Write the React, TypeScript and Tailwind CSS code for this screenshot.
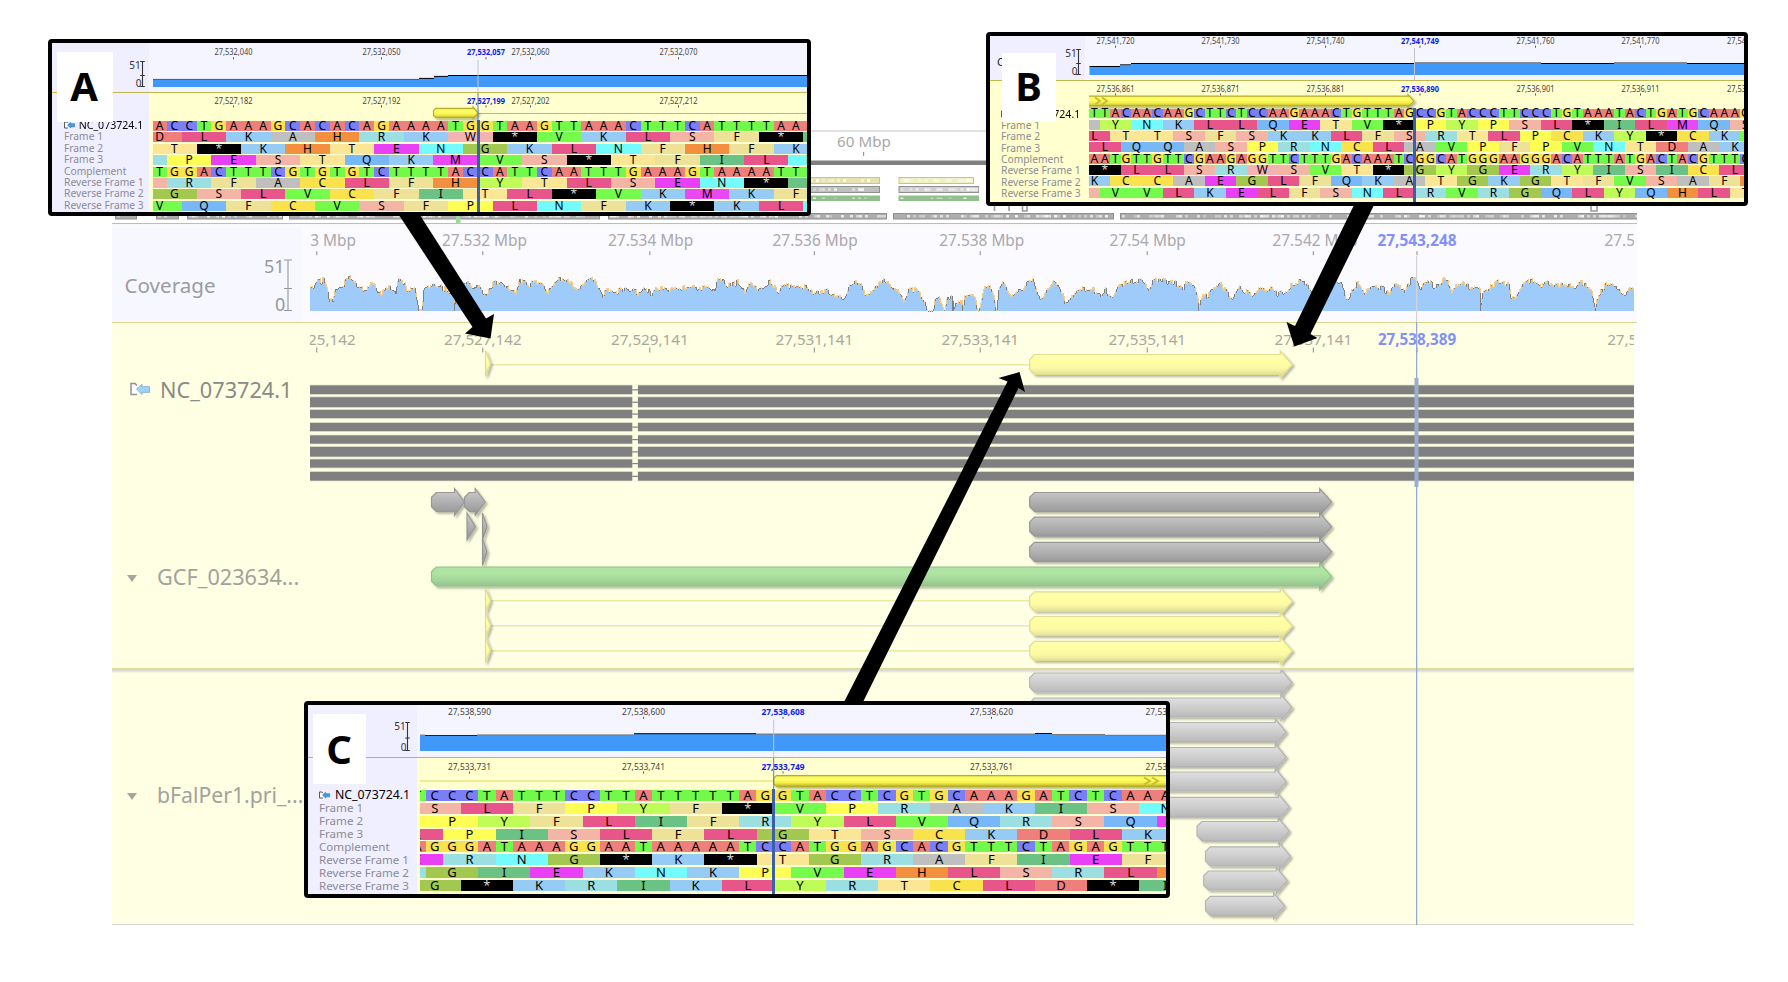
import React from "react";

const FONT = "font-['Noto_Sans','Open_Sans',sans-serif]";

/* ---------- residue colours ---------- */

const BASE: Record<string, string> = {
  A: "bg-[#ee7f7a]",
  C: "bg-[#7b7ff7]",
  G: "bg-[#f9e24c]",
  T: "bg-[#72fa4b]",
};

const AMINO: Record<string, string> = {
  D: "bg-[#ee7f7a]",
  L: "bg-[#e8558a]",
  K: "bg-[#96cbf6]",
  A: "bg-[#bfbfbf]",
  H: "bg-[#f29040]",
  R: "bg-[#9bdfe2]",
  W: "bg-[#f4b3b3]",
  T: "bg-[#fbe695]",
  "*": "bg-black text-[#dcdcdc]",
  E: "bg-[#ea40f5]",
  N: "bg-[#74fbfd]",
  P: "bg-[#fffe54]",
  S: "bg-[#f5b5a6]",
  Q: "bg-[#78b8f8]",
  F: "bg-[#eee298]",
  M: "bg-[#ea48f5]",
  V: "bg-[#74fb4c]",
  C: "bg-[#f9e24c]",
  I: "bg-[#6ac284]",
  G: "bg-[#a3c850]",
  Y: "bg-[#c0fc58]",
};

const PAIR: Record<string, string> = { A: "T", T: "A", C: "G", G: "C" };

/* ---------- small drawing helpers ---------- */

type Tick = { x: number; top: string; bottom: string; bold?: boolean; dx?: number };

function Ruler({
  ticks,
  line,
  y,
  size,
  width,
  tickGap,
  tickLen,
  color,
  boldColor,
  tickColor = "#555",
}: {
  ticks: Tick[];
  line: "top" | "bottom";
  y: number;
  size: number;
  width?: number;
  tickGap: number;
  tickLen: number;
  color: string;
  boldColor: string;
  tickColor?: string;
}) {
  return (
    <g>
      {ticks.map((t) => (
        <g key={t.x}>
          <text
            x={t.x + (line === "top" && t.dx ? t.dx : 0)}
            y={y}
            fontSize={size}
            textAnchor="middle"
            fontWeight={t.bold ? 700 : 400}
            fill={t.bold ? boldColor : color}
            textLength={width}
            lengthAdjust="spacingAndGlyphs"
          >
            {t[line]}
          </text>
          <rect x={t.x - 0.5} y={y + tickGap} width={1} height={tickLen} fill={tickColor} />
        </g>
      ))}
    </g>
  );
}

function Arrow({
  x1,
  x2,
  cy,
  body = 9.5,
  head = 13.5,
  headLen = 12,
  fill,
  stroke,
}: {
  x1: number;
  x2: number;
  cy: number;
  body?: number;
  head?: number;
  headLen?: number;
  fill: string;
  stroke: string;
}) {
  const h = x2 - headLen;
  const c = body / 2;
  const d =
    headLen >= x2 - x1
      ? `M${x1} ${cy - head}L${x2} ${cy}L${x1} ${cy + head}Z`
      : `M${x1 + c} ${cy - body}H${h}V${cy - head}L${x2} ${cy}L${h} ${cy + head}V${cy + body}H${x1 + c}L${x1} ${
          cy + c
        }V${cy - c}Z`;
  return <path d={d} fill={fill} stroke={stroke} strokeWidth={1.2} filter="url(#shade)" />;
}

function ContigIcon({ className, faded }: { className: string; faded?: boolean }) {
  return (
    <svg viewBox="0 0 20 14" className={className}>
      <path d="M7 12.5H1V1.5H5L7 3.5" fill="white" stroke={faded ? "#909098" : "#333"} strokeWidth={1.5} />
      <path
        d="M6.5 7L12 2.2V4.6H19.5V10.4H12V12.6Z"
        fill={faded ? "#9fcffb" : "#3f9bf5"}
        stroke={faded ? "#8aa8c8" : "#27527f"}
        strokeWidth={0.8}
      />
    </svg>
  );
}

function Scale({
  x,
  top,
  mid,
  bottom,
  size,
  color,
  half,
}: {
  x: number;
  top: number;
  mid: number;
  bottom: number;
  size: number;
  color: string;
  half: number;
}) {
  return (
    <g fill={color}>
      <text x={x - half + 0.5} y={top + size * 0.72} fontSize={size} textAnchor="end">
        51
      </text>
      <text x={x - half + 1.2} y={bottom} fontSize={size} textAnchor="end">
        0
      </text>
      <path
        d={`M${x} ${top}V${bottom}M${x - half} ${top}H${x + half}M${x - half} ${mid}H${x + half}M${x - half} ${bottom}H${
          x + half
        }`}
        stroke={color}
        strokeWidth={1.1}
        fill="none"
      />
    </g>
  );
}

/* ---------- inset panels ---------- */

type Row = { kind: "base" | "amino"; offset: number; seq: string };

type Step = { x: number; y: number; color: string };

type InsetData = {
  letter: string;
  frame: string;
  badge: string;
  asideW: string;
  asideLowerBg: string;
  upper: string;
  lower: string;
  labels: string;
  labelRow: string;
  nameClass: string;
  rowsPad: string;
  rowH: string;
  cellH: string;
  letterSize: string;
  left: number;
  asideRight: number;
  right: number;
  top: number;
  split: number;
  rowsTop: number;
  trackX: number;
  origin: number;
  col: number;
  scale: { x: number; top: number; mid: number; bottom: number };
  coverageBase: number;
  coverage: Step[];
  rulerTop: number;
  rulerBottom: number;
  labelW: number;
  ticks: Tick[];
  rows: Row[];
  cursor: number;
  cursorTop: number;
  annotation: React.ReactNode;
};

const complement = (s: string) => s.split("").map((b) => PAIR[b]).join("");

const makeRows = (seq: string, aminos: [number, string][]): Row[] => {
  const am = aminos.map(([offset, s]) => ({ kind: "amino" as const, offset, seq: s }));
  return [
    { kind: "base", offset: 0, seq },
    ...am.slice(0, 3),
    { kind: "base", offset: 0, seq: complement(seq) },
    ...am.slice(3),
  ];
};

const ROW_NAMES = ["Frame 1", "Frame 2", "Frame 3", "Complement", "Reverse Frame 1", "Reverse Frame 2", "Reverse Frame 3"];

function SequenceRow({ row, d }: { row: Row; d: InsetData }) {
  const span = row.kind === "base" ? 1 : 3;
  const shift = d.origin + row.offset * d.col - d.trackX;
  return (
    <div className={`flex items-start overflow-x-clip ${d.rowH}`}>
      <div className="flex shrink-0" style={{ marginLeft: shift }}>
        {row.seq.split("").map((ch, i) => (
          <span
            key={i}
            className={`flex shrink-0 items-center justify-center leading-none ${d.cellH} ${d.letterSize} ${
              (row.kind === "base" ? BASE : AMINO)[ch]
            }`}
            style={{ width: span * d.col }}
          >
            {ch}
          </span>
        ))}
      </div>
    </div>
  );
}

function Inset({ d }: { d: InsetData }) {
  const pts = d.coverage;
  const area =
    `M${pts[0].x} ${d.coverageBase}` +
    pts.map((p, i) => `V${p.y}H${i + 1 < pts.length ? pts[i + 1].x : d.right}`).join("") +
    `V${d.coverageBase}Z`;
  return (
    <section className={`absolute overflow-hidden rounded-[4px] border-4 border-black bg-[#ffffcf] text-black ${d.frame}`}>
      <div className={`flex border-b border-[#bdb84a] bg-[#f5f5ff] ${d.upper}`}>
        <svg
          viewBox={`${d.left} ${d.top} ${d.asideRight - d.left} ${d.split - d.top}`}
          className={`h-full shrink-0 bg-[#efefff] ${d.asideW}`}
        >
          {d.letter === "B" && (
            <text x={d.left + 7} y={66} fontSize={11} fill="#222">
              Coverage
            </text>
          )}
          <Scale {...d.scale} size={10} color="#333" half={2.3} />
        </svg>
        <svg
          viewBox={`${d.asideRight} ${d.top} ${d.right - d.asideRight} ${d.split - d.top}`}
          className="h-full min-w-0 flex-1"
        >
          <Ruler
            ticks={d.ticks}
            line="top"
            y={d.rulerTop}
            size={9}
            width={d.labelW}
            tickGap={2}
            tickLen={2}
            color="#444"
            boldColor="#0a1af0"
          />
          <path d={area} fill="#4099f8" />
          {pts.map((p, i) => (
            <rect
              key={p.x}
              x={p.x}
              y={p.y - 0.6}
              width={(i + 1 < pts.length ? pts[i + 1].x : d.right) - p.x}
              height={1}
              fill={p.color}
            />
          ))}
          <rect x={d.cursor - 0.5} y={d.cursorTop} width={1} height={60} fill="#c4c4c8" />
        </svg>
      </div>
      <div className="flex min-h-0 flex-1">
        <div className={`flex shrink-0 flex-col whitespace-nowrap text-[#8c8c94] ${d.asideW} ${d.asideLowerBg} ${d.labels}`}>
          <div className={`flex items-center text-black ${d.labelRow}`}>
            <ContigIcon className="h-[8px] w-[11px] shrink-0" />
            <span className={`origin-left ${d.nameClass}`}>NC_073724.1</span>
          </div>
          {ROW_NAMES.map((n) => (
            <div key={n} className={`flex items-center ${d.labelRow}`}>
              {n}
            </div>
          ))}
        </div>
        <div className="flex min-w-0 flex-1 flex-col">
          <svg
            viewBox={`${d.asideRight} ${d.split + 1} ${d.right - d.asideRight} ${d.rowsTop - d.split - 1}`}
            className={`w-full shrink-0 ${d.lower}`}
          >
            <Ruler
              ticks={d.ticks}
              line="bottom"
              y={d.rulerBottom}
              size={9}
              width={d.labelW}
              tickGap={1.7}
              tickLen={2}
              color="#444"
              boldColor="#0a1af0"
            />
            <svg
              x={d.trackX}
              y={d.split}
              width={d.right - d.trackX}
              height={60}
              viewBox={`${d.trackX} ${d.split} ${d.right - d.trackX} 60`}
            >
              {d.annotation}
            </svg>
            {d.letter !== "B" && <rect x={d.cursor - 0.5} y={d.split} width={1} height={60} fill="#5b7db8" />}
          </svg>
          <div className={`relative flex flex-col ${d.rowsPad}`}>
            {d.rows.map((r, i) => (
              <SequenceRow key={i} row={r} d={d} />
            ))}
            <div
              className="absolute -top-px h-[120px] w-[3px] bg-[#3d5fa6]"
              style={{ left: d.cursor - 1.5 - d.asideRight }}
            />
          </div>
        </div>
      </div>
      <div className={`absolute flex items-center justify-center bg-white font-bold ${d.badge}`}>
        <span className="text-[40px] leading-none">{d.letter}</span>
      </div>
    </section>
  );
}

const BAR = "url(#bright)";

const PANEL_A: InsetData = {
  letter: "A",
  frame: "left-[48px] top-[39px] w-[763px] h-[177px] flex flex-col",
  badge: "left-[5px] top-[9px] w-[56px] h-[70px] pb-[3px] pr-[2px]",
  asideW: "w-[97px]",
  asideLowerBg: "bg-[#efefff]",
  upper: "h-[50px]",
  lower: "h-[28px]",
  labels: "pt-[26.5px] pl-[12px] text-[10.25px]",
  labelRow: "h-[11.38px] leading-none shrink-0",
  nameClass: "pl-[4px] text-[11.5px] scale-x-[0.92]",
  rowsPad: "pl-[4px]",
  rowH: "h-[11.38px]",
  cellH: "h-[10px]",
  letterSize: "text-[12px]",
  left: 52,
  asideRight: 149,
  right: 807,
  top: 43,
  split: 92,
  rowsTop: 121,
  trackX: 153,
  origin: 152.2,
  col: 14.8,
  scale: { x: 142.5, top: 61.5, mid: 75.5, bottom: 86.5 },
  coverageBase: 87,
  coverage: [
    { x: 153, y: 79.5, color: "#555" },
    { x: 419, y: 78.5, color: "#000" },
    { x: 434, y: 76.5, color: "#000" },
    { x: 448, y: 75.6, color: "#000" },
  ],
  rulerTop: 55.3,
  rulerBottom: 103.7,
  labelW: 38,
  ticks: [
    { x: 233.5, top: "27,532,040", bottom: "27,527,182" },
    { x: 381.5, top: "27,532,050", bottom: "27,527,192" },
    { x: 486, top: "27,532,057", bottom: "27,527,199", bold: true },
    { x: 530.5, top: "27,532,060", bottom: "27,527,202" },
    { x: 678.5, top: "27,532,070", bottom: "27,527,212" },
  ],
  rows: makeRows("ACCTGAAAGCACACAGAAAATGGTAAGTTAAACTTTCATTTTAAA", [
    [-1, "DLKAHRKW*VKLSF*I"],
    [0, "T*KHTENGKLNFHFK"],
    [-2, "RPESTQKMVS*TFILN"],
    [-2, "SRFACLFHYTLSEN*I"],
    [0, "GSLVCFITL*VKMKF"],
    [-1, "VQFCVSFPLNFK*KLN"],
  ]),
  cursor: 478,
  cursorTop: 60,
  annotation: (
    <g>
      <rect x={478} y={113} width={330} height={1} fill="#c4bd3c" />
      <Arrow x1={433.5} x2={478} cy={113} body={4.7} head={6} headLen={5} fill={BAR} stroke="#b5ae2c" />
    </g>
  ),
};

const PANEL_B: InsetData = {
  letter: "B",
  frame: "left-[986px] top-[32px] w-[762px] h-[174px] flex flex-col",
  badge: "left-[12px] top-[17px] w-[54px] h-[69px] pb-[4px] pr-[1px]",
  asideW: "w-[95px]",
  asideLowerBg: "bg-[#ffffcf]",
  upper: "h-[45px]",
  lower: "h-[27.5px]",
  labels: "pt-[27px] pl-[11px] text-[10.25px]",
  labelRow: "h-[11.33px] leading-none shrink-0",
  nameClass: "pl-[4px] text-[11.5px] scale-x-[0.92]",
  rowsPad: "pl-[4px]",
  rowH: "h-[11.33px]",
  cellH: "h-[9.8px]",
  letterSize: "text-[12px]",
  left: 990,
  asideRight: 1085,
  right: 1744,
  top: 36,
  split: 80,
  rowsTop: 108.5,
  trackX: 1089,
  origin: 1089.1,
  col: 10.5,
  scale: { x: 1078.5, top: 49.5, mid: 63.5, bottom: 74.5 },
  coverageBase: 75,
  coverage: [
    { x: 1089.5, y: 66.6, color: "#000" },
    { x: 1120, y: 64.8, color: "#333" },
    { x: 1131, y: 63.6, color: "#000" },
    { x: 1414, y: 62.8, color: "#777" },
    { x: 1541, y: 63.6, color: "#000" },
    { x: 1614, y: 62.8, color: "#777" },
    { x: 1687, y: 63.6, color: "#000" },
  ],
  rulerTop: 43.7,
  rulerBottom: 91.8,
  labelW: 38,
  ticks: [
    { x: 1115.5, top: "27,541,720", bottom: "27,536,861" },
    { x: 1220.5, top: "27,541,730", bottom: "27,536,871" },
    { x: 1325.5, top: "27,541,740", bottom: "27,536,881" },
    { x: 1420, top: "27,541,749", bottom: "27,536,890", bold: true },
    { x: 1535.5, top: "27,541,760", bottom: "27,536,901" },
    { x: 1640.5, top: "27,541,770", bottom: "27,536,911" },
    { x: 1746, top: "27,541,780", bottom: "27,536,921" },
  ],
  rows: makeRows("TTACAACAAGCTTCTCCAAGAAACTGTTTAGCCGTACCCTTCCCTGTAAATACTGATGCAAAG", [
    [-2, "AYNKLLQETV*PYPSL*ILMQS"],
    [-1, "LTTSFSKKLFSRTLPCKY*CKV"],
    [0, "LQQASPRNCLAVPFPVNTDAK"],
    [0, "*LLSRWSVT*GYGERYISICL"],
    [-1, "KCCAEGLFQKATGKGTFVSAFH"],
    [-2, "SVVLKELFSNLRVRGQLYQHLT"],
  ]),
  cursor: 1414.5,
  cursorTop: 48,
  annotation: (
    <g>
      <Arrow x1={1080} x2={1414} cy={101} body={4.8} head={6.5} headLen={6} fill={BAR} stroke="#b5ae2c" />
      <path d="M1095 97.5l5 3.5l-5 3.5M1102 97.5l5 3.5l-5 3.5" fill="none" stroke="#c8bf30" strokeWidth={2} />
    </g>
  ),
};

const PANEL_C: InsetData = {
  letter: "C",
  frame: "left-[304px] top-[701px] w-[866px] h-[197px] flex flex-col",
  badge: "left-[5px] top-[9px] w-[53px] h-[70px] pb-[1px] pr-[1px]",
  asideW: "w-[109px]",
  asideLowerBg: "bg-[#efefff]",
  upper: "h-[53px]",
  lower: "h-[32px]",
  labels: "pt-[31px] pl-[11px] text-[11.6px]",
  labelRow: "h-[12.87px] leading-none shrink-0",
  nameClass: "pl-[5px] text-[12.3px]",
  rowsPad: "pl-[3px]",
  rowH: "h-[12.87px]",
  cellH: "h-[11px]",
  letterSize: "text-[13px]",
  left: 308,
  asideRight: 417,
  right: 1166,
  top: 705,
  split: 757,
  rowsTop: 790,
  trackX: 420,
  origin: 408.6,
  col: 17.4,
  scale: { x: 407.5, top: 722.5, mid: 738, bottom: 750.5 },
  coverageBase: 751,
  coverage: [
    { x: 420, y: 735.2, color: "#777" },
    { x: 425, y: 735.6, color: "#222" },
    { x: 477, y: 735, color: "#777" },
    { x: 634, y: 733.8, color: "#000" },
    { x: 756, y: 734.2, color: "#666" },
    { x: 1035, y: 733.6, color: "#000" },
    { x: 1052, y: 734.6, color: "#777" },
    { x: 1105, y: 735.4, color: "#666" },
  ],
  rulerTop: 714.8,
  rulerBottom: 769.8,
  labelW: 43,
  ticks: [
    { x: 469.5, top: "27,538,590", bottom: "27,533,731" },
    { x: 643.5, top: "27,538,600", bottom: "27,533,741" },
    { x: 783, top: "27,538,608", bottom: "27,533,749", bold: true },
    { x: 991.5, top: "27,538,620", bottom: "27,533,761" },
    { x: 1167, top: "27,538,630", bottom: "27,533,771" },
  ],
  rows: makeRows("TCCCTATTTCCTTATTTTTAGGTACCTCGTGCAAAGATCTCAAA", [
    [0, "SLFPYF*VPRAKISN"],
    [-2, "PPYFLIFRYLVQRSQE"],
    [-1, "LPISLFLGTSCKDLK"],
    [-1, "ERNG*K*TGRAFIEF"],
    [-2, "RGIEKNKPVEHLSRLH"],
    [0, "G*KRIKLYRTCLD*I"],
  ]),
  cursor: 773.7,
  cursorTop: 720,
  annotation: (
    <g>
      <rect x={420} y={780.5} width={354} height={1} fill="#e0d65a" />
      <Arrow x1={773.7} x2={1190} cy={781} body={5.3} head={6.5} headLen={6} fill={BAR} stroke="#b5ae2c" />
      <path d="M1144 777.5l6 3.5l-6 3.5M1152 777.5l6 3.5l-6 3.5" fill="none" stroke="#c8bf30" strokeWidth={2} />
    </g>
  ),
};

/* ---------- coverage profile ---------- */

type Block = { x0: number; y0: number; sx: number; pts: number[] };

const BLOCKS: Block[] = [
  {
    x0: 100,
    y0: 210,
    sx: 2.8,
    pts: [
      589, 235, 600, 230, 610, 212, 625, 214, 634, 235, 640, 270, 650, 275, 656, 240, 668, 225, 680, 225, 690, 205, 700,
      203, 710, 215, 725, 235, 745, 245, 752, 220, 765, 220, 775, 245, 790, 250, 798, 232, 820, 235, 826, 255, 834, 212,
      850, 215, 858, 245, 880, 235, 890, 300, 900, 300, 905, 235, 930, 222, 945, 225, 960, 240, 975, 245, 988, 260, 990,
      300, 994, 240, 1020, 215, 1040, 228, 1055, 235, 1065, 245, 1077, 260, 1090, 235, 1105, 215, 1125, 222, 1145, 235,
      1162, 252,
    ],
  },
  {
    x0: 480,
    y0: 200,
    sx: 3,
    pts: [
      118, 243, 130, 240, 145, 260, 155, 248, 175, 250, 190, 265, 200, 280, 215, 252, 230, 240, 245, 235, 265, 243, 285,
      268, 300, 262, 315, 240, 335, 240, 350, 262, 365, 285, 375, 272, 400, 275, 430, 268, 460, 270, 470, 283, 495, 262,
      512, 285, 525, 265, 560, 270, 600, 265, 625, 258, 650, 270, 685, 262, 700, 275, 712, 240, 728, 240, 740, 258, 775,
      248, 790, 278, 805, 248, 830, 270, 850, 255, 865, 248, 880, 262, 895, 282,
    ],
  },
  {
    x0: 780,
    y0: 110,
    sx: 2.8,
    pts: [
      4, 530, 20, 527, 40, 532, 75, 532, 90, 548, 110, 548, 125, 535, 140, 555, 165, 555, 175, 575, 185, 545, 195, 520,
      212, 512, 222, 530, 235, 545, 260, 545, 275, 520, 292, 512, 310, 525, 320, 545, 335, 548, 345, 570, 357, 540, 375,
      540, 390, 555, 402, 575, 410, 603, 428, 603, 430, 575, 438, 560, 450, 575, 455, 603, 459, 600, 468, 565, 480, 560,
      485, 603, 490, 575, 510, 580, 511, 603, 515, 555, 530, 555, 545, 575, 550, 603, 556, 603, 560, 575, 570, 535, 588,
      535, 598, 560, 602, 603, 606, 600, 610, 540, 620, 520, 635, 545, 645, 555, 655, 545, 680, 535, 695, 515, 705, 512,
      715, 540, 725, 575, 740, 555, 755, 530, 765, 518, 780, 530, 795, 575, 810, 570, 825, 545, 850, 540, 880, 545, 895,
      555, 910, 540, 925, 570, 945, 535, 965, 520, 990, 512, 1010, 515, 1030, 540, 1040, 520, 1060, 510, 1100, 520, 1130,
      535, 1140, 512, 1160, 530, 1168, 570, 1171, 603, 1175, 570, 1195, 555, 1220, 530, 1232, 520, 1245, 545, 1265, 570,
      1285, 535, 1300, 545, 1320, 555, 1340, 540, 1360, 548, 1370, 530, 1385, 550, 1410, 555, 1425, 530, 1450, 515,
    ],
  },
  {
    x0: 1200,
    y0: 200,
    sx: 3,
    pts: [
      300, 240, 320, 255, 335, 275, 360, 280, 380, 250, 400, 240, 420, 255, 435, 290, 445, 300, 455, 275, 470, 250, 485,
      275, 490, 285, 500, 260, 520, 260, 545, 265, 565, 285, 575, 260, 595, 260, 612, 280, 622, 250, 640, 235, 650, 250,
      660, 278, 672, 250, 685, 242, 700, 262, 715, 255, 730, 235, 745, 255, 755, 285, 770, 250, 785, 245, 800, 262, 825,
      260, 838, 275, 841, 333, 845, 275, 865, 265, 890, 250, 925, 247, 930, 290, 940, 300, 950, 285, 965, 255, 985, 245,
      1000, 240, 1015, 260, 1040, 250, 1060, 260, 1090, 255, 1120, 260, 1145, 250, 1160, 260, 1175, 285, 1184, 333, 1188,
      290, 1205, 275, 1220, 250, 1235, 248, 1250, 260, 1270, 285, 1290, 268, 1302, 265,
    ],
  },
];

/* Narrow drop-outs that reach the base line. */
const DROPS = [418, 454, 943, 952, 953, 962, 977, 995, 996, 1198, 1480, 1595];

const COVERAGE = BLOCKS.flatMap((b) => {
  const out: { x: number; y: number }[] = [];
  for (let i = 0; i < b.pts.length; i += 2) out.push({ x: b.x0 + b.pts[i] / b.sx, y: b.y0 + b.pts[i + 1] / 3 });
  return out;
});

const hash = (n: number) => {
  const v = Math.sin(n * 127.1) * 43758.5453;
  return v - Math.floor(v);
};

const COVERAGE_BASE = 311;
const profile: number[] = [];
{
  let k = 0;
  for (let x = 310; x < 1634; x++) {
    while (k < COVERAGE.length - 2 && COVERAGE[k + 1].x < x) k++;
    const a = COVERAGE[k];
    const b = COVERAGE[k + 1];
    const t = Math.max(0, Math.min(1, (x - a.x) / (b.x - a.x)));
    const y = a.y + (b.y - a.y) * t;
    const n = y > 304 ? 0 : Math.round((hash(Math.floor(x / 2)) - 0.5) * 5.4);
    profile.push(Math.min(COVERAGE_BASE, Math.round(y + n)));
  }
}

function CoveragePlot() {
  const area = `M310 ${COVERAGE_BASE}` + profile.map((y, i) => `V${y}H${311 + i}`).join("") + `V${COVERAGE_BASE}Z`;
  let grey = "";
  let amber = "";
  profile.forEach((y, i) => {
    const x = 310 + i;
    const prev = i ? profile[i - 1] : y;
    const lo = Math.min(prev, y);
    const h = Math.max(1, Math.abs(prev - y));
    grey += `M${x} ${lo}h1v${h}h-1z`;
    if (hash(x * 3.3) > 0.5) amber += `M${x} ${lo - 1}h1v${Math.min(5, h + 0.9)}h-1z`;
  });
  DROPS.forEach((x) => {
    const y = profile[x - 310];
    grey += `M${x} ${y}h1V${COVERAGE_BASE}h-1z`;
  });
  return (
    <g shapeRendering="crispEdges">
      <path d={area} fill="#9fcbfb" />
      <path d={grey} fill="#7f7f7f" />
      <path d={amber} fill="#f4cd8a" />
    </g>
  );
}

/* ---------- overview strip ---------- */

function Strip({
  x1,
  x2,
  y,
  h,
  edge,
  fill,
  light,
}: {
  x1: number;
  x2: number;
  y: number;
  h: number;
  edge: string;
  fill: string;
  light: number;
}) {
  const cells = [];
  for (let x = x1 + 2; x < x2 - 3; x += 3) {
    const v = hash(x + y);
    if (v < light) cells.push(<rect key={x} x={x} y={y + 2} width={3} height={h - 4} fill="white" opacity={0.25 + v / light / 1.6} />);
  }
  return (
    <g>
      <rect x={x1 + 0.5} y={y + 0.5} width={x2 - x1 - 1} height={h - 1} fill={fill} stroke={edge} />
      {cells}
    </g>
  );
}

function Overview() {
  const genes: [number, number][] = [
    [115, 137],
    [156, 179],
    [187, 283],
    [289, 600],
    [608, 887],
    [893, 1114],
    [1120, 1640],
  ];
  return (
    <svg viewBox="112 130 1525 98" className="h-[98px] w-full shrink-0">
      <rect x={112} y={130.5} width={1525} height={1} fill="#c4c4c4" />
      <text x={864} y={147.3} fontSize={15.2} textAnchor="middle" fill="#a8a8a8">
        60 Mbp
      </text>
      <rect x={863} y={152} width={1.2} height={4} fill="#999" />
      <rect x={112} y={160.5} width={1525} height={4.5} fill="#808080" />
      <Strip x1={700} x2={880} y={177} h={7} edge="#cac583" fill="#e6e3b0" light={0.4} />
      <Strip x1={898.5} x2={974} y={177} h={7} edge="#cac583" fill="#f0efc4" light={0.6} />
      <Strip x1={700} x2={880} y={186} h={7} edge="#909090" fill="#c0c0c0" light={0.5} />
      <Strip x1={898.5} x2={979} y={186} h={7} edge="#909090" fill="#cfcfcf" light={0.5} />
      <Strip x1={700} x2={880} y={195.5} h={5.5} edge="#8fbf8a" fill="#93bf90" light={0.3} />
      <Strip x1={898.5} x2={979} y={195.5} h={5.5} edge="#8fbf8a" fill="#93bf90" light={0.3} />
      <path d="M994.5 204V211M1009 204V211M1022.5 204V211H1027V204M1591 204V211H1597V204" fill="none" stroke="#999" strokeWidth={1.6} />
      {genes.map(([a, b]) => (
        <Strip key={a} x1={a} x2={b} y={213} h={6.5} edge="#909090" fill="#adadad" light={0.5} />
      ))}
      <rect x={456} y={215} width={4.5} height={8} fill="#a2d79c" />
      <rect x={112} y={223} width={1525} height={1.2} fill="#bdbdbd" />
      <rect x={112} y={224.2} width={1525} height={4} fill="#fafafa" />
    </svg>
  );
}

/* ---------- main tracks ---------- */

const MAIN_TICKS: Tick[] = [
  { x: 316.8, top: "27.53 Mbp", bottom: "27,525,142", dx: 1 },
  { x: 482.8, top: "27.532 Mbp", bottom: "27,527,142", dx: 1.6 },
  { x: 649.8, top: "27.534 Mbp", bottom: "27,529,141", dx: 0.8 },
  { x: 814.3, top: "27.536 Mbp", bottom: "27,531,141", dx: 0.8 },
  { x: 980.2, top: "27.538 Mbp", bottom: "27,533,141", dx: 1.6 },
  { x: 1147.2, top: "27.54 Mbp", bottom: "27,535,141", dx: 0.5 },
  { x: 1313.3, top: "27.542 Mbp", bottom: "27,537,141", dx: 1.6 },
  { x: 1417, top: "27,543,248", bottom: "27,538,389", bold: true },
  { x: 1646, top: "27.546 Mbp", bottom: "27,541,141", dx: 1 },
];

const READS: [number, number][] = [
  [385.5, 394],
  [397.3, 407],
  [410, 418],
  [423, 431],
  [435.5, 443.5],
  [447, 456.5],
  [459.5, 467.5],
  [472, 480.5],
];

const YELLOW = { fill: "url(#pale)", stroke: "#e0dc90" };
const GREY = { fill: "url(#grey)", stroke: "#979797" };
const SILVER = { fill: "url(#silver)", stroke: "#b4b4b4" };

const SILVER_ROWS: [number, number, number][] = [
  [1029.7, 1292, 682.5],
  [1029.7, 1292, 707.5],
  [1029.7, 1286.3, 732],
  [1029.7, 1286.3, 757],
  [1029.7, 1286.3, 781.5],
  [1029.7, 1289.3, 806.8],
  [1197, 1289.3, 831],
  [1205.5, 1290.6, 856.3],
  [1203.7, 1287.3, 880.5],
  [1205.5, 1284.6, 905.8],
];

function Intron({ y }: { y: number }) {
  return (
    <g>
      <rect x={491} y={y - 2.2} width={538} height={4.5} fill="#fffffa" />
      <rect x={491} y={Math.round(y) - 1} width={538} height={1.6} fill="#eeea9a" />
    </g>
  );
}

function ReferenceTrack() {
  return (
    <svg viewBox="310 323 1324 345" className="h-[345px] w-[1324px] shrink-0">
      <Ruler
        ticks={MAIN_TICKS}
        line="bottom"
        y={344.5}
        size={15.2}
        tickGap={3}
        tickLen={5}
        color="#a8a89d"
        boldColor="#8290fa"
        tickColor="#8c8c84"
      />
      <Intron y={365} />
      <Arrow x1={485.5} x2={490.4} cy={363.5} head={13} {...YELLOW} />
      <Arrow x1={1029.7} x2={1292.3} cy={364.5} body={10} {...YELLOW} />
      {READS.map(([a, b]) => (
        <g key={a}>
          <rect x={310} y={a - 0.7} width={1324} height={b - a + 1.4} fill="#c6c6b8" />
          <rect x={310} y={a} width={1324} height={b - a} fill="#808080" />
          <rect x={632.3} y={a - 1} width={5.6} height={b - a + 2} fill="#feffe3" />
          <rect x={632.3} y={(a + b) / 2 - 0.5} width={5.6} height={1.2} fill="#80807a" />
        </g>
      ))}
      <Arrow x1={431.5} x2={464.5} cy={502} headLen={10} {...GREY} />
      <Arrow x1={464.5} x2={485.2} cy={502} headLen={10} {...GREY} />
      <Arrow x1={467} x2={475.5} cy={526.5} headLen={20} {...GREY} />
      <Arrow x1={482.5} x2={487} cy={526.5} headLen={20} {...GREY} />
      <Arrow x1={482.5} x2={487} cy={552} headLen={20} {...GREY} />
      <Arrow x1={1029.7} x2={1331.7} cy={502} {...GREY} />
      <Arrow x1={1029.7} x2={1331.7} cy={526.7} {...GREY} />
      <Arrow x1={1029.7} x2={1331.7} cy={551.8} {...GREY} />
      <Arrow x1={431.5} x2={1331.7} cy={576.5} fill="url(#green)" stroke="#8cc487" />
      {[601.3, 626, 650.8].map((y) => (
        <g key={y}>
          <Intron y={y} />
          <Arrow x1={485.5} x2={490.4} cy={y - 0.5} head={12.5} {...YELLOW} />
          <Arrow x1={1029.7} x2={1292.3} cy={y} {...YELLOW} />
        </g>
      ))}
    </svg>
  );
}

function Defs() {
  const ramps: [string, string[]][] = [
    ["pale", ["#fdfcb8", "#ffffa2", "#fbf9a4", "#dedc98"]],
    ["bright", ["#f4ee60", "#ffff62", "#f6f04e", "#b9b12c"]],
    ["grey", ["#c8c8c8", "#b8b8b8", "#a8a8a8", "#979797"]],
    ["silver", ["#e0e0e0", "#d4d4d4", "#c6c6c6", "#b8b8b8"]],
    ["green", ["#b0e0a4", "#b0e4a2", "#a2d698", "#96bd8e"]],
  ];
  return (
    <svg className="absolute size-0">
      <defs>
        {ramps.map(([id, stops]) => (
          <linearGradient key={id} id={id} x1="0" y1="0" x2="0" y2="1">
            {stops.map((c, i) => (
              <stop key={i} offset={0.1 + i * 0.27} stopColor={c} />
            ))}
          </linearGradient>
        ))}
        <filter id="shade" filterUnits="userSpaceOnUse" x="0" y="0" width="1788" height="982">
          <feDropShadow dx="2" dy="2" stdDeviation="1.3" floodColor="#000" floodOpacity="0.28" />
        </filter>
      </defs>
    </svg>
  );
}

export default function App() {
  return (
    <div className={`relative h-[982px] w-[1788px] overflow-hidden bg-white ${FONT}`}>
      <Defs />

      <main className="ml-[112px] flex w-[1525px] flex-col pt-[130px]">
        <Overview />

        <div className="flex h-[95px] border-b-[1.5px] border-[#dcd88c] bg-[#fbfaff]">
          <div className="flex w-[190px] shrink-0 items-start bg-[#f7f7ff]">
            <span className="mt-[45px] ml-[12.5px] w-[92.5px] text-[20.6px] leading-[24px] text-[#9c9ca1]">Coverage</span>
            <svg viewBox="217 228 85 93" className="h-[93px] w-[85px] shrink-0">
              <Scale x={288} top={260} mid={288.5} bottom={310.5} size={18} color="#98989c" half={4} />
            </svg>
          </div>
          <svg viewBox="302 228 1332 93" className="h-[93px] w-[1332px] shrink-0">
            <svg x={310} y={228} width={1324} height={93} viewBox="310 228 1324 93">
              <Ruler
                ticks={MAIN_TICKS}
                line="top"
                y={246.2}
                size={15.4}
                tickGap={5}
                tickLen={4}
                color="#a8a8ad"
                boldColor="#8290fa"
                tickColor="#8c8c90"
              />
              <CoveragePlot />
            </svg>
          </svg>
        </div>

        <div className="flex h-[345px] w-[1522px] bg-[#feffe3]">
          <div className="flex w-[198px] shrink-0 flex-col text-[21.7px] leading-[28px] whitespace-nowrap">
            <div className="mt-[53px] flex items-center pl-[18px] text-[#8a8a86]">
              <ContigIcon faded className="mb-[2px] h-[14px] w-[20px] shrink-0" />
              <span className="pl-[10px]">NC_073724.1</span>
            </div>
            <div className="mt-[159px] flex items-center text-[#a2a29c]">
              <span className="mt-[3px] ml-[15px] border-x-[5.5px] border-t-[7px] border-x-transparent border-t-[#a6a6a0]" />
              <span className="pl-[20px]">GCF_023634...</span>
            </div>
          </div>
          <ReferenceTrack />
        </div>

        <div className="flex h-[257px] w-[1522px] border-t-2 border-b border-t-[#dedba0] border-b-[#d9d9d4] bg-[#feffe3] shadow-[inset_0_3px_2px_-1px_#dcdcd6]">
          <div className="flex w-[198px] shrink-0 items-center pb-[4px] text-[21.2px] leading-[28px] text-[#a2a29c]">
            <span className="mt-[3px] ml-[15px] border-x-[5.5px] border-t-[7px] border-x-transparent border-t-[#a6a6a0]" />
            <span className="pl-[20px] whitespace-nowrap">bFalPer1.pri_...</span>
          </div>
          <svg viewBox="310 670 1324 254" className="h-[254px] w-[1324px] shrink-0">
            {SILVER_ROWS.map(([a, b, y]) => (
              <Arrow key={y} x1={a} x2={b} cy={y} head={13} headLen={11} {...SILVER} />
            ))}
          </svg>
        </div>
      </main>

      <svg viewBox="1410 250 14 676" className="absolute top-[250px] left-[1410px] h-[676px] w-[14px]">
        <rect x={1416} y={256} width={1.2} height={66} fill="#d4d4d8" />
        <rect x={1416} y={322} width={1.3} height={603} fill="#93abd0" />
        <rect x={1414.5} y={378} width={4} height={109} fill="#9dadcf" />
      </svg>

      <Inset d={PANEL_A} />
      <Inset d={PANEL_B} />

      <svg viewBox="0 0 1788 982" className="absolute inset-0 h-[982px] w-[1788px]">
        <polygon points="397,212 472.5,327 465,333.5 490.5,338.5 494,314 486,318.5 418,212" />
        <polygon points="1355,203 1295,326 1286.5,322 1294.3,346.5 1317.5,338 1310.5,334 1375,203" />
        <polygon points="842,706 1007.5,381.5 998.5,378 1019.5,372 1025,392 1018.5,388 861,706" />
      </svg>

      <Inset d={PANEL_C} />
    </div>
  );
}
